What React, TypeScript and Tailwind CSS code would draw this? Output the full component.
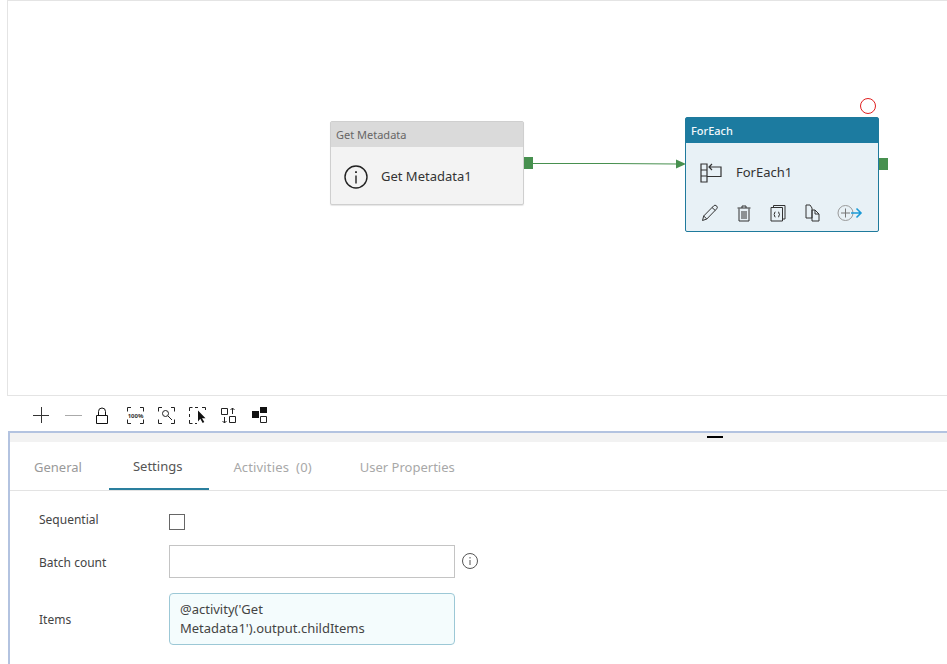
import React from "react";

const font = { fontFamily: '"Noto Sans", "Open Sans", sans-serif' };

function Svg({ w = 20, h = 20, children, className = "" }: { w?: number; h?: number; children: React.ReactNode; className?: string }) {
  return (
    <svg width={w} height={h} viewBox={`0 0 ${w} ${h}`} fill="none" stroke="#222" strokeWidth={1} className={`shrink-0 ${className}`}>
      {children}
    </svg>
  );
}

function Corners() {
  return <path d="M.5 4.500V.5h3.500M13 .5h3.500v4M16.500 12.500v4H13M4 16.500H.5v-4" />;
}

function Toolbar() {
  return (
    <div className="flex h-[35px] items-center pl-[26px] pt-[3px] bg-white">
      <Svg w={16} h={16} className="mr-[16px]"><path d="M8.500 0v16M0 8.500h16" stroke="#333" /></Svg>
      <Svg w={17} h={16} className="mr-[13px]"><path d="M0 8.500h17" stroke="#aaa" /></Svg>
      <Svg w={14} h={17} className="mr-[18px]"><path d="M1.500 8.500h11v8h-11zM3.500 8.500V4.500a3.500 3.500 0 0 1 7 0v4" stroke="#111" /></Svg>
      <Svg w={17} h={17} className="mr-[14px]">
        <Corners />
        <text x="8.500" y="10.500" textAnchor="middle" fontSize="6" fontWeight="700" fill="#333" stroke="none">100%</text>
      </Svg>
      <Svg w={17} h={17} className="mr-[14px]">
        <Corners />
        <circle cx="7.500" cy="6.500" r="3" />
        <path d="M10 9l4 4" />
      </Svg>
      <Svg w={17} h={17} className="mr-[14px]">
        <path d="M.5 4V.5h3M6 .5h3M13 .5h3.500V3M.5 7v3M.5 13v3.500h3M6 16.500h2" />
        <path d="M9 3.500v11l2.300-2.700 2.400 4.200 1.600-1-2.300-3.800h3.500z" fill="#111" stroke="none" />
      </Svg>
      <Svg w={17} h={17} className="mr-[14px]">
        <path d="M1.500 1.500h6v6h-6zM9.500 9.500h6v6h-6zM12.500 7V1M10.500 3l2-2 2 2M4.500 10v6M2.500 14l2 2 2-2" />
      </Svg>
      <Svg w={17} h={17}>
        <path d="M1 4h7v7H1zM9 0h7v6H9z" fill="#111" stroke="none" />
        <path d="M9.500 9.500h6v6h-6z" />
      </Svg>
    </div>
  );
}

function MetadataNode() {
  return (
    <div className="absolute left-[322px] top-[120px] w-[194px] h-[84px] rounded-[2px] border border-[#cfcfcf] bg-[#f3f3f3] shadow-[0_1px_1px_rgba(0,0,0,0.1)] flex flex-col">
      <div className="h-[25px] bg-[#dadada] pl-[5px] pt-[1px] flex items-center text-[11px] text-[#666]">Get Metadata</div>
      <div className="flex-1 flex items-center pt-[2px] pl-[13px] gap-[13px] text-[13px] text-[#333]">
        <svg width="24" height="24" viewBox="0 0 24 24" fill="none" stroke="#222" strokeWidth="1.400">
          <circle cx="12" cy="12" r="11" />
          <path d="M12 10.500v8" />
          <path d="M12 6.200v1.800" strokeWidth="1.800" />
        </svg>
        <span>Get Metadata1</span>
      </div>
      <div className="absolute left-[193px] top-[35px] w-[9px] h-[12px] bg-[#47904f]" />
    </div>
  );
}

function ForEachNode() {
  return (
    <div className="absolute left-[677px] top-[116px] w-[194px] h-[115px] rounded-[2px] border border-[#1f7a9c] bg-[#e8f1f6] flex flex-col">
      <div className="h-[25px] bg-[#1c7ba0] pl-[5px] pt-[1px] flex items-center text-[11px] font-medium text-[#f2f8fb]">ForEach</div>
      <div className="h-[58px] flex items-center pt-[2px] pl-[14px] gap-[14px] text-[13px] text-[#333]">
        <svg width="22" height="20" viewBox="0 0 22 20" fill="none" stroke="#333" strokeWidth="1.200">
          <path d="M1 1h6v18H1zM1 7h6M1 13h6M7 13.500h14V4h-12M12 1L9 4l3 3" />
        </svg>
        <span>ForEach1</span>
      </div>
      <div className="mt-[3px] flex items-center pl-[15px] gap-[18px]">
        <svg width="18" height="18" viewBox="0 0 18 18" fill="none" stroke="#333" strokeWidth="1">
          <path d="M1.500 16.500l1.200-4.500L12.500 2a1.800 1.800 0 0 1 3.200 2.800L5.800 15z" />
          <path d="M2.700 12l3.100 3M11 3.500l3.300 3" />
        </svg>
        <svg width="14" height="18" viewBox="0 0 14 18" fill="none" stroke="#333" strokeWidth="1">
          <path d="M2 4.500V17h10V4.500M0.500 4h13M5 4V2h4v2M5 7v8M7 7v8M9 7v8" />
        </svg>
        <svg width="16" height="18" viewBox="0 0 16 18" fill="none" stroke="#333" strokeWidth="1" className="ml-[1px]">
          <path d="M1 3.500h11.500V17H1zM3.500 3.500V1.500h11.500V15h-2.500" />
          <path d="M5.500 8q-1 0-1 1v1l-.7.500.7.500v1q0 1 1 1M8 8q1 0 1 1v1l.7.500-.7.500v1q0 1-1 1" />
        </svg>
        <svg width="15" height="18" viewBox="0 0 15 18" fill="none" stroke="#333" strokeWidth="1" className="ml-[1px]">
          <path d="M1 1h4l2 3v10H1zM7 6h3l4 4v7H7zM10 6v4h4" />
        </svg>
        <svg width="26" height="18" viewBox="0 0 26 18" fill="none" className="ml-[-1px]">
          <circle cx="8.500" cy="9" r="7.500" stroke="#999" />
          <path d="M8.500 4.500v9M4 9h9" stroke="#777" />
          <path d="M14 9h10M19.500 4.500L24 9l-4.500 4.500" stroke="#1c9ad6" strokeWidth="1.600" />
        </svg>
      </div>
      <div className="absolute left-[193px] top-[40px] w-[9px] h-[12px] bg-[#47904f]" />
      <div className="absolute left-[174px] top-[-20px] w-[16px] h-[16px] rounded-full border border-[#e02020]" />
    </div>
  );
}

function Tabs() {
  const tab = "flex items-center pt-[3px] text-[13px]";
  return (
    <div className="h-[49px] flex items-stretch border-b border-[#e3e3e3] pl-[24px]">
      <div className={`${tab} text-[#999]`}>General</div>
      <div className={`${tab} ml-[27px] pl-[24px] pr-[27px] text-[#555] border-b-2 border-[#2a7f9e]`}>Settings</div>
      <div className={`${tab} ml-[24px] text-[#a8a8a8] whitespace-pre tracking-[0.15px]`}>Activities  (0)</div>
      <div className={`${tab} ml-[48px] text-[#a8a8a8]`}>User Properties</div>
    </div>
  );
}

function Form() {
  return (
    <div className="pl-[29px] text-[12px] text-[#444]">
      <div className="flex items-center h-[54px] pt-[8px]">
        <div className="w-[130px] mb-[5px]">Sequential</div>
        <div className="w-[16px] h-[16px] border border-[#666] bg-white" />
      </div>
      <div className="flex items-center h-[33px]">
        <div className="w-[130px] pt-[2px]">Batch count</div>
        <div className="w-[286px] h-[33px] border border-[#c4c4c4] bg-white" />
        <svg width="16" height="16" viewBox="0 0 16 16" fill="none" stroke="#555" className="ml-[7px] mt-[-1px]">
          <circle cx="8" cy="8" r="7.500" />
          <path d="M8 7v5M8 4v1.500" />
        </svg>
      </div>
      <div className="flex items-center mt-[15px]">
        <div className="w-[130px] pt-[1px]">Items</div>
        <div className="w-[286px] h-[52px] rounded-[4px] border border-[#9cc8d6] bg-[#f4fcfd] pl-[10px] pt-[6px] text-[13px] leading-[19px] text-[#444]">
          @activity('Get
          <br />
          Metadata1').output.childItems
        </div>
      </div>
    </div>
  );
}

export default function App() {
  return (
    <div className="w-[947px] h-[664px] overflow-hidden bg-white pl-[7px] flex flex-col" style={font}>
      <div className="relative h-[396px] shrink-0 border-l border-t border-[#e4e4e4] border-b">
        <MetadataNode />
        <ForEachNode />
        <svg width="160" height="12" viewBox="0 0 160 12" fill="none" className="absolute left-[525px] top-[157px]">
          <path d="M0 5.500h77l68 .5" stroke="#47904f" />
          <path d="M143 1.500l10 4.500-10 4.500z" fill="#47904f" />
        </svg>
      </div>
      <Toolbar />
      <div className="flex-1 ml-[1px] border-t-2 border-l-2 border-[#b3c3e0]">
        <div className="h-[9px] bg-[#f2f2f2] flex justify-start">
          <div className="ml-[697px] mt-[3px] w-[16px] h-[2px] bg-black" />
        </div>
        <Tabs />
        <Form />
      </div>
    </div>
  );
}
